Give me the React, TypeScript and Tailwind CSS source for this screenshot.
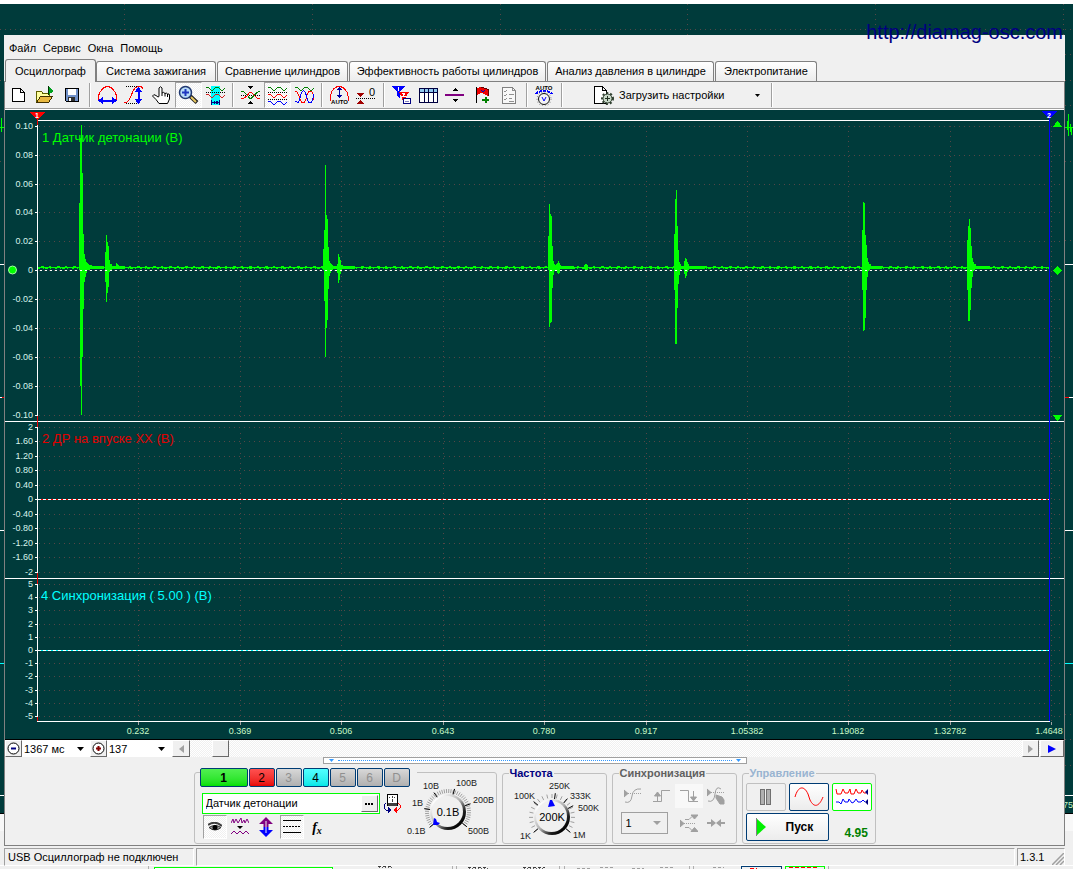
import React, { useState } from 'react';

type Column = [number, number, number];

interface Panel {
  title: string;
  titleX: number;
  titleY: number;
  color: string;
  top: number;
  bottom: number;
  labels: string[];
  rows: number[];
}

const panels: Panel[] = [
  {
    title: '1 Датчик детонации (В)',
    titleX: 42,
    titleY: 142,
    color: '#00ff00',
    top: 120,
    bottom: 415,
    labels: ['0.10', '0.08', '0.06', '0.04', '0.02', '0', '-0.02', '-0.04', '-0.06', '-0.08', '-0.10'],
    rows: [126, 155, 184, 212, 241, 270, 299, 328, 357, 386, 415]
  },
  {
    title: '2 ДР на впуске XX (В)',
    titleX: 42,
    titleY: 443,
    color: '#e00000',
    top: 427,
    bottom: 572,
    labels: ['2', '1.60', '1.20', '0.80', '0.40', '0', '-0.40', '-0.80', '-1.20', '-1.60', '-2'],
    rows: [427, 441, 456, 470, 485, 499, 514, 528, 543, 557, 572]
  },
  {
    title: '4 Синхронизация ( 5.00 ) (В)',
    titleX: 41,
    titleY: 600,
    color: '#00ffff',
    top: 584,
    bottom: 717,
    labels: ['5', '4', '3', '2', '1', '0', '-1', '-2', '-3', '-4', '-5'],
    rows: [584, 597, 610, 624, 637, 650, 663, 676, 690, 703, 716]
  }
];

const timeTicks: [number, string][] = [
  [138, '0.232'],
  [240, '0.369'],
  [341, '0.506'],
  [443, '0.643'],
  [544, '0.780'],
  [646, '0.917'],
  [747, '1.05382'],
  [848, '1.19082'],
  [950, '1.32782'],
  [1051, '1.4648']
];

// x, top, bottom of every signal column that leaves the noise band
const spikes: Column[] = [
  [79, 203, 270], [80, 138, 386], [81, 125, 415], [82, 173, 357], [83, 234, 309], [84, 254, 282], [85, 259, 277],
  [86, 262, 273], [87, 263, 270], [88, 264, 270], [89, 265, 270], [90, 265, 269], [91, 265, 269],
  [105, 252, 282], [106, 235, 302], [107, 242, 293], [108, 246, 287], [109, 260, 272], [110, 264, 271], [111, 264, 270],
  [116, 263, 269], [117, 264, 269], [118, 265, 269],
  [323, 249, 270], [324, 230, 301], [325, 165, 357], [326, 215, 328], [327, 219, 320], [328, 247, 289], [329, 261, 276],
  [330, 263, 273], [331, 264, 270], [332, 265, 270], [337, 264, 273], [338, 254, 283], [339, 257, 280], [340, 260, 274],
  [341, 265, 270], [342, 265, 269],
  [548, 236, 270], [549, 204, 327], [550, 214, 323], [551, 216, 322], [552, 246, 288], [553, 261, 275], [554, 264, 271],
  [555, 265, 270], [556, 264, 270], [557, 263, 273], [558, 261, 274], [559, 263, 273], [560, 265, 269],
  [584, 265, 269], [585, 264, 270], [586, 264, 271], [587, 265, 270],
  [674, 234, 290], [675, 199, 344], [676, 190, 344], [677, 226, 308], [678, 250, 284], [679, 262, 275], [680, 264, 271],
  [684, 261, 274], [685, 258, 278], [686, 259, 276], [687, 262, 272], [688, 264, 270],
  [862, 230, 290], [863, 202, 331], [864, 203, 330], [865, 235, 318], [866, 245, 290], [867, 258, 277], [868, 262, 271],
  [869, 264, 270], [870, 264, 269],
  [967, 240, 290], [968, 226, 321], [969, 219, 321], [970, 228, 310], [971, 246, 288], [972, 258, 277], [973, 262, 271],
  [974, 264, 270], [975, 264, 269]
];

const tails: [number, number][] = [[84, 104], [109, 125], [328, 355], [552, 574], [678, 705], [866, 882], [971, 990]];

function Scope() {
  return (
    <svg viewBox="5 110 1059 629" className="block w-full h-auto bg-[#003b3b]" shapeRendering="crispEdges">
      <path d="M5 421.5h1059M5 578.5h1059M37 120.5h1013M37 721.5h1013" stroke="#fff" />

      {panels.map((p) => (
        <g key={p.title}>
          {p.rows.map((y, i) => (
            <g key={y}>
              <path d={`M39 ${y + 0.5}H1061`} stroke="#544646" strokeDasharray="1 4" />
              <path d={`M35 ${y + 0.5}h3`} stroke="#fff" />
              <text x="33" y={y + 3} textAnchor="end" fontSize="9" fill="#d8f4ec">{p.labels[i]}</text>
            </g>
          ))}
          {timeTicks.map(([x]) => (
            <path key={x} d={`M${x + 0.5} ${p.top + 6}V${p.bottom + 4}`} stroke="#544646" strokeDasharray="1 4" />
          ))}
          <text x={p.titleX} y={p.titleY} fontSize="13" fill={p.color}>{p.title}</text>
        </g>
      ))}

      {timeTicks.map(([x, label]) => (
        <g key={x}>
          <path d={`M${x + 0.5} 722v3`} stroke="#a0a0a0" />
          <text x={x === 1051 ? 1049 : x} y="734" textAnchor="middle" fontSize="9" fill="#c8fac8">{label}</text>
        </g>
      ))}

      {/* zero lines */}
      <path d="M38 499.5h1011" stroke="#ff0000" />
      <path d="M38 499.5h1011" stroke="#fff" strokeDasharray="3 2" />
      <path d="M38 650.5h1011" stroke="#00ffff" />
      <path d="M38 650.5h1011" stroke="#fff" strokeDasharray="3 2" />

      {/* knock sensor signal */}
      <g fill="#00ff00">
        <path d="M38 267h1011v1H38z" />
        <path d="M38 268.5h1011" stroke="#00ff00" strokeDasharray="2 3 1 1 3 2 1 4" />
        <path d="M41 266.5h1008" stroke="#00ff00" strokeDasharray="3 5 2 6" />
        {tails.map(([a, b]) => (
          <rect key={a} x={a} y="266" width={b - a} height="3" />
        ))}
        {spikes.map(([x, top, bottom]) => (
          <rect key={x} x={x} y={top} width="1" height={bottom - top} />
        ))}
      </g>
      <path d="M40 270.5h1009" stroke="#fff" strokeDasharray="2 3" />

      {/* axis and cursors */}
      <path d="M37.5 120v601" stroke="#fff" />
      <path d="M37.5 119v6M37.5 416v11M37.5 573v11M37.5 717v4" stroke="#f00000" />
      <path d="M1049.5 118v603" stroke="#0000ff" />
      <path d="M30 112h15l-7 8h-1z" fill="#ff0000" />
      <path d="M1042 111h15l-7 8h-1z" fill="#0000ff" />
      <text x="37" y="118" textAnchor="middle" fontSize="7" fontWeight="700" fill="#fff">1</text>
      <text x="1049" y="118" textAnchor="middle" fontSize="7" fontWeight="700" fill="#fff">2</text>

      <g fill="#00ff00">
        <path d="M1053 127h9l-4-6h-1zM1053 415h9l-4 6h-1zM1053 270.5l4.5-4.5 4.5 4.5-4.5 4.5z" />
        <circle cx="12.5" cy="270" r="4" stroke="#a0ffa0" strokeWidth="1" shapeRendering="auto" />
      </g>
    </svg>
  );
}

// Desktop window that shows from under the main one
function Backdrop() {
  return (
    <svg viewBox="0 0 1077 869" className="absolute inset-x-0 top-0 w-full h-auto" shapeRendering="crispEdges" aria-hidden="true">
      <rect x="0" y="4" width="1073" height="809" fill="#003b3b" />
      <rect x="0" y="813" width="1073" height="1" fill="#000" />
      <rect x="0" y="814" width="1073" height="17" fill="#f8f8f8" />
      <rect x="0" y="831" width="1073" height="38" fill="#f0f0f0" />
      <path d="M0 29.5h1073M0 80.5h5M1065 54.5h8M1065 80.5h8M1065 105.5h8M0 161.5h5M1065 161.5h8M1065 240.5h8M1065 714.5h8M1065 739.5h8M1065 765.5h8" stroke="#544646" strokeDasharray="1 4" />
      <path d="M124.5 4v31M312.5 4v31M500.5 4v31M687.5 4v31M875.5 4v31M1063.5 4v31" stroke="#544646" strokeDasharray="1 4" />
      <path d="M0 264.5h4M0 530.5h4M0 795.5h4M1065 264.5h8M1065 530.5h8M1065 795.5h8" stroke="#fff" />
      <path d="M0 397.5h4M1065 397.5h8" stroke="#ff0000" />
      <path d="M0 397.5h2M1069 397.5h4" stroke="#fff" />
      <path d="M0 663.5h4M1065 663.5h8" stroke="#00ffff" />
      <path d="M1.5 118v14M0 127.5h4M1067.5 121v9M1068.5 114v22M1070.5 124v8M1071.5 127v8M1065 127.5h8" stroke="#00ff00" />
      <text x="1063" y="808" fontSize="9" fill="#c8fac8">75</text>
      <path d="M0 865.5h1073" stroke="#fff" />
      <path d="M154 869v-2h178v2" stroke="#00ff00" fill="#fff" />
      {/* tops of the dial labels */}
      <path d="M378 866.5h14M468 867.5h20M523 867.5h22" stroke="#404040" strokeDasharray="3 2" />
      <path d="M379 867.5h13M469 868.5h19M524 868.5h21" stroke="#606060" strokeDasharray="1 2" />
      <path d="M148.5 865v4M452.5 865v4M456.5 865v4M559.5 865v4M564.5 865v4M689.5 865v4M693.5 865v4M828.5 865v4" stroke="#b0b0b0" />
      <path d="M577 868.5h14M600 867.5h13M632 868.5h12M660 867.5h14M713 867.5h11" stroke="#a0a0a0" strokeDasharray="3 2" />
      <path d="M741.5 869v-3h40v3" stroke="#003c74" fill="none" />
      <path d="M785.5 869v-3h39v3" stroke="#00ff00" fill="none" />
      <path d="M750 868.5h7M789 867.5h28" stroke="#ff0000" strokeDasharray="4 2" />
    </svg>
  );
}

const wave = (y: number) => `M4 ${y}h2l3 3h2l3-3h2l3 3h2l2-2`;

// Toolbar drawings, each on a 27x22 grid
const icons: Record<string, React.ReactNode> = {
  new: <path d="M7.500 4.500h8l4 4v9h-12zM15.500 4.500v4h4" fill="#fff" stroke="#000" />,
  open: (
    <>
      <path d="M4.500 18.500v-11h5l1.500 2h6v4" fill="#ffffa0" stroke="#606000" />
      <path d="M4.500 18.500l4-6h12l-4 6z" fill="#e8b840" stroke="#403000" />
      <path d="M16 2l6 5-6 4z" fill="#00a020" />
      <path d="M16 2v9" stroke="#003000" />
    </>
  ),
  save: (
    <>
      <path d="M6.500 4.500h13v13h-12l-1-1z" fill="#7090c8" stroke="#000" />
      <path d="M9 5h8v6H9z" fill="#fff" />
      <path d="M9 13h7v4H9z" fill="#303030" />
      <path d="M10 14h2v3h-2z" fill="#fff" />
    </>
  ),
  arc: (
    <>
      <path d="M4.500 16v-4l1-3 2-3 2-2 3-1.500h2l3 1.500 2 2 2 3 1 3v4" fill="none" stroke="#ff0000" />
      <path d="M6 16.500h15" stroke="#0000ff" strokeWidth="2" />
      <path d="M4 16.500l5-3.500v7zM23 16.500l-5-3.500v7z" fill="#0000ff" />
    </>
  ),
  rise: (
    <>
      <path d="M5 2.500h12M5 19.500h12" stroke="#000" strokeDasharray="1 1" />
      <path d="M3 19l3-1 2-2 2-4 2-5 2-3 3-1.500h3l2 2" fill="none" stroke="#ff0000" />
      <path d="M17.500 5v13" stroke="#0000ff" strokeWidth="2" />
      <path d="M17.500 3l4 5h-8zM17.500 20l4-5h-8z" fill="#0000ff" />
    </>
  ),
  hand: (
    <path d="M11 12.500V4q1.500-2.500 3 0v5q1.500-1.500 3 .5 1.500-1 2.500.5 2-.5 2 1v4l-2 4.500H11l-3-4-3.500-3.500q1-2.500 3.500-.5l2 1.500zM14 9v3M17 9.500V12.500M19.500 10v3" fill="#fff" stroke="#000" shapeRendering="auto" />
  ),
  zoom: (
    <g shapeRendering="auto">
      <path d="M15 12l7 6.500" stroke="#202020" strokeWidth="4" />
      <path d="M16 13l5 5" stroke="#e8c860" strokeWidth="2" />
      <circle cx="10.500" cy="8.500" r="6" fill="#b8dcf8" stroke="#203870" strokeWidth="1.500" />
      <path d="M7 8.500h7M10.500 5v7" stroke="#2038c0" strokeWidth="2" />
    </g>
  ),
  span: (
    <>
      <path d="M9 2h9v19H9z" fill="#00ffff" />
      <path d={wave(3)} fill="none" stroke="#008000" />
      <path d="M4 8.500h19" stroke="#000" strokeDasharray="1 1" />
      <path d={wave(10)} fill="none" stroke="#d02020" />
      <path d="M9.500 16v5M17.500 16v5M10 18.500h7" stroke="#000080" />
      <path d="M10 18.500l3-2v4zM17 18.500l-3-2v4z" fill="#000080" />
    </>
  ),
  cross: (
    <>
      <path d="M4 11.500h19" stroke="#000" strokeDasharray="1 1" />
      <path d="M4 7l3 1 3 3 3 3.500h1l3-3 3-3 3-1.500" fill="none" stroke="#008000" />
      <path d="M4 15l3-1 3-2 3-4h1l3 3 3 3 3 1" fill="none" stroke="#ff0000" />
      <path d="M11 2h5l-2.500 3zM11 20h5l-2.500-3z" fill="#000" />
    </>
  ),
  split: (
    <>
      <path d={wave(3)} fill="none" stroke="#008000" />
      <path d="M4 8.500h19M4 15.500h19" stroke="#000" strokeDasharray="1 1" />
      <path d={wave(10)} fill="none" stroke="#ff0000" />
      <path d={wave(17)} fill="none" stroke="#0000ff" />
    </>
  ),
  merge: (
    <>
      <path d={wave(3)} fill="none" stroke="#008000" />
      <path d="M4 7c5 0 4 12 8 12s3-12 7-12 3 6 4 9" fill="none" stroke="#ff0000" />
      <path d="M4 17c3 2 4 2 5-3s3-9 5-6 2 11 5 11 3-7 4-9" fill="none" stroke="#0000ff" />
    </>
  ),
  autoY: (
    <>
      <path d="M4.500 17v-5l1-4 2-3 3-2 2-.5h2l3 1.500 2 2 2 3 .5 3v5" fill="none" stroke="#ff0000" />
      <path d="M13.500 4v9" stroke="#0000a0" />
      <path d="M13.500 2.500l3 3.500h-6zM13.500 14.500l3-3.500h-6z" fill="#0000a0" />
      <text x="13.500" y="20" textAnchor="middle" fontSize="6" fontWeight="700" fill="#000">AUTO</text>
    </>
  ),
  zero: (
    <>
      <path d="M3 14.500h20" stroke="#000" strokeDasharray="1 1" />
      <path d="M4 9h7l-3.500 4zM4 20h7l-3.500-4z" fill="#a00000" />
      <text x="19" y="12" textAnchor="middle" fontSize="11" fill="#000">0</text>
    </>
  ),
  filter: (
    <>
      <path d="M4 2h13l-5 6v6l-3-2V8z" fill="#0000ff" />
      <path d="M11 8h10l-3 5v6l-4-3v-3z" fill="#ff0000" />
      <path d="M10.500 3v4" stroke="#fff" />
      <path d="M14 9h3l-2 3h3" stroke="#fff" fill="none" />
      <path d="M15.500 14.500h7v5h-7z" fill="#fff" stroke="#000080" />
      <path d="M17 17.500h4" stroke="#8080c0" />
    </>
  ),
  table: (
    <>
      <path d="M4.500 4.500h18v14h-18z" fill="#fff" stroke="#000040" />
      <path d="M5 5h17v3H5z" fill="#90c8f0" />
      <path d="M4 8.500h18M9.500 5v14M13.500 5v14M18.500 5v14" stroke="#000040" />
    </>
  ),
  divide: (
    <>
      <path d="M3 10h19v2H3z" fill="#800080" />
      <path d="M10 7h6l-3-3zM10 15h6l-3 3z" fill="#000" />
    </>
  ),
  flag: (
    <>
      <path d="M7.500 3v16" stroke="#000" strokeWidth="1" />
      <path d="M8 4l4-1 3 1 4 1v7l-4-2-3-1-4 2z" fill="#ee0000" />
      <path d="M12 3.500l3 .5 4 1.500v6" stroke="#600000" fill="none" />
      <path d="M12 6l2 2 2-2" stroke="#0000c0" fill="none" />
      <path d="M13 16h7M16.500 13v6" stroke="#008000" strokeWidth="2" />
    </>
  ),
  check: (
    <>
      <path d="M6.500 3.500h10l3 3v13h-13z" fill="#f8f8f8" stroke="#808080" />
      <path d="M16.500 3.500v3h3M13 10.500h5M13 14.500h3M13 17.500h5M8 7l1 1 2-2M8 11l1 1 2-2M8 15l1 1 2-2" fill="none" stroke="#909090" />
    </>
  ),
  autoKnob: (
    <>
      <text x="13" y="6" textAnchor="middle" fontSize="6" fontWeight="700" fill="#000">AUTO</text>
      <path d="M5 10c2-4 14-4 16 0" fill="none" stroke="#0000ff" strokeWidth="2" strokeDasharray="3 1" />
      <circle cx="13" cy="15" r="5.500" fill="#f4f4f4" stroke="#101010" shapeRendering="auto" />
      <circle cx="13" cy="15" r="7" fill="none" stroke="#808080" strokeDasharray="1 2" shapeRendering="auto" />
      <path d="M11 13l2 4 2-4" fill="none" stroke="#0000ff" shapeRendering="auto" />
    </>
  )
};

interface Tool {
  icon: string;
  label: string;
  pressed?: boolean;
}

const toolGroups: Tool[][] = [
  [
    { icon: 'new', label: 'Новый' },
    { icon: 'open', label: 'Открыть' },
    { icon: 'save', label: 'Сохранить' }
  ],
  [
    { icon: 'arc', label: 'Масштаб по времени' },
    { icon: 'rise', label: 'Масштаб по амплитуде' },
    { icon: 'hand', label: 'Перемещение' },
    { icon: 'zoom', label: 'Лупа', pressed: true },
    { icon: 'span', label: 'Выделение' }
  ],
  [
    { icon: 'cross', label: 'Сжать' },
    { icon: 'split', label: 'Раздельно', pressed: true },
    { icon: 'merge', label: 'Совместно' }
  ],
  [
    { icon: 'autoY', label: 'Авто' },
    { icon: 'zero', label: 'Ноль' }
  ],
  [
    { icon: 'filter', label: 'Фильтр' },
    { icon: 'table', label: 'Таблица' },
    { icon: 'divide', label: 'Разделить' },
    { icon: 'flag', label: 'Метка' },
    { icon: 'check', label: 'Список' }
  ],
  [{ icon: 'autoKnob', label: 'Автонастройка' }]
];

const hatch = 'bg-[repeating-conic-gradient(#ffffff_0_25%,#f0f0f0_0_50%)] bg-[length:2px_2px]';
const sunken = 'border border-t-[#a0a0a0] border-l-[#a0a0a0] border-r-white border-b-white';
const raised = 'border border-t-white border-l-white border-r-[#696969] border-b-[#696969] bg-[#f0f0f0]';

function Separator() {
  return (
    <div className="w-2 h-6 flex justify-center">
      <div className="w-[2px] h-full bg-[#a0a0a0] border-r border-white" />
    </div>
  );
}

function Toolbar() {
  return (
    <div className="flex items-center h-[27px] border-b border-[#a0a0a0]">
      {toolGroups.map((group, i) => (
        <React.Fragment key={i}>
          {group.map((t) => (
            <button
              key={t.icon}
              aria-label={t.label}
              className={`w-[27px] h-[26px] flex items-center justify-center ${t.pressed ? `${hatch} ${sunken}` : ''}`}
            >
              <svg width="27" height="22" viewBox="0 0 27 22" className="shrink-0" shapeRendering="crispEdges">{icons[t.icon]}</svg>
            </button>
          ))}
          <Separator />
        </React.Fragment>
      ))}
      <button className="ml-6 w-[178px] h-[26px] flex items-center text-[11px]">
        <svg width="26" height="22" viewBox="0 0 26 22" className="shrink-0" shapeRendering="crispEdges">
          <path d="M4.500 2.500h8l4 4v13h-12zM12.500 2.500v4h4" fill="#fff" stroke="#000" />
          <g shapeRendering="auto">
            <circle cx="17.500" cy="14.500" r="4.500" fill="#c8d8c8" stroke="#304030" />
            <circle cx="17.500" cy="14.500" r="5.500" fill="none" stroke="#304030" strokeWidth="2" strokeDasharray="2 2" />
            <path d="M15 14.500h5M17.500 12v5" stroke="#203020" />
          </g>
        </svg>
        <span className="ml-[3px] flex-1 text-left whitespace-nowrap">Загрузить настройки</span>
        <svg width="5" height="3" viewBox="0 0 5 3" className="mr-2"><path d="M0 0h5L2.500 3z" fill="#000" /></svg>
      </button>
      <Separator />
    </div>
  );
}

const tabs = [
  { name: 'Осциллограф', width: 'w-[91px]' },
  { name: 'Система зажигания', width: 'w-[120px]' },
  { name: 'Сравнение цилиндров', width: 'w-[131px]' },
  { name: 'Эффективность работы цилиндров', width: 'w-[197px]' },
  { name: 'Анализ давления в цилиндре', width: 'w-[167px]' },
  { name: 'Электропитание', width: 'w-[102px]' }
];

function TabBar() {
  const [active, setActive] = useState(0);

  return (
    <div role="tablist" className="flex items-end h-[23px] pl-px border-b border-[#808080]">
      {tabs.map((t, i) => (
        <button
          key={t.name}
          role="tab"
          aria-selected={i === active}
          onClick={() => setActive(i)}
          className={`${t.width} shrink-0 text-[11px] text-center whitespace-nowrap border border-b-0 border-[#808080] rounded-t-[3px] ${
            i === active ? 'h-[23px] -mb-px bg-[#f0f0f0]' : 'h-5 mr-px bg-linear-to-b from-white to-[#ececec]'
          }`}
        >
          {t.name}
        </button>
      ))}
    </div>
  );
}

function TimeBar() {
  const combo = 'block appearance-none w-full h-full pl-[2px] bg-white text-[11px] leading-4 outline-none';
  return (
    <div className={`flex items-stretch h-[18px] border-t border-black ${hatch}`}>
      <button aria-label="Уменьшить" className={`w-[17px] flex items-center justify-center ${raised}`}>
        <svg width="13" height="13" viewBox="0 0 13 13" className="shrink-0"><circle cx="6.500" cy="6.500" r="5.500" fill="#fff" stroke="#000" /><path d="M4 6.500h5" stroke="#000080" strokeWidth="2" /></svg>
      </button>
      <div className="relative w-[66px] pr-[2px] bg-white">
        <select aria-label="Длительность" className={combo}><option>1367 мс</option></select>
        <svg width="7" height="4" viewBox="0 0 7 4" className="absolute right-1 top-[7px] pointer-events-none"><path d="M0 0h7L3.500 4z" /></svg>
      </div>
      <div className="w-[2px] bg-white" />
      <button aria-label="Увеличить" className={`w-[17px] flex items-center justify-center ${raised}`}>
        <svg width="13" height="13" viewBox="0 0 13 13" className="shrink-0"><circle cx="6.500" cy="6.500" r="5.500" fill="#fff" stroke="#000" /><path d="M4 6.500h5M6.500 4v5" stroke="#800000" strokeWidth="2" /></svg>
      </button>
      <div className="relative w-[65px] bg-white">
        <select aria-label="Масштаб" className={combo}><option>137</option></select>
        <svg width="7" height="4" viewBox="0 0 7 4" className="absolute right-[7px] top-[7px] pointer-events-none"><path d="M0 0h7L3.500 4z" /></svg>
      </div>
      <button aria-label="Назад" className={`w-[18px] flex items-center justify-center ${raised}`}>
        <svg width="5" height="8" viewBox="0 0 5 8"><path d="M5 0v8L0 4z" fill="#a0a0a0" /></svg>
      </button>
      <div className="flex-1 flex"><div className={`ml-[22px] w-[17px] ${raised}`} /></div>
      <button aria-label="Вперёд" className={`w-[17px] mr-px flex items-center justify-center ${raised}`}>
        <svg width="5" height="8" viewBox="0 0 5 8"><path d="M0 0v8l5-4z" fill="#a0a0a0" /></svg>
      </button>
      <button aria-label="Воспроизвести" className={`w-6 flex items-center justify-center ${raised}`}>
        <svg width="8" height="8" viewBox="0 0 8 8"><path d="M0 0v8l8-4z" fill="#0000ff" /></svg>
      </button>
    </div>
  );
}

interface KnobProps {
  cx: number;
  step: number;
  value: string;
  pointer: string;
  marks: [number, number, number, string][]; // angle, label x, label y, label
  viewBox: string;
  width: number;
}

function Knob({ cx, step, value, pointer, marks, viewBox, width }: KnobProps) {
  const cy = 817;
  const tick = (deg: number, r1: number, r2: number) => {
    const a = (deg * Math.PI) / 180;
    return `M${cx + r1 * Math.sin(a)} ${cy - r1 * Math.cos(a)}L${cx + r2 * Math.sin(a)} ${cy - r2 * Math.cos(a)}`;
  };
  const minor: number[] = [];
  for (let d = -130; d <= 130; d += step) minor.push(d);
  const id = `knob-${cx}`;

  return (
    <svg width={width} height="64" viewBox={viewBox} className="shrink-0">
      <defs>
        <linearGradient id={id} x1="0.15" y1="0.15" x2="0.85" y2="0.85">
          <stop offset="0" stopColor="#ffffff" />
          <stop offset="0.5" stopColor="#b0b0b0" />
          <stop offset="0.8" stopColor="#202020" />
          <stop offset="1" stopColor="#000000" />
        </linearGradient>
      </defs>
      {minor.map((d) => <path key={d} d={tick(d, 19, 23)} stroke="#a0a0a0" />)}
      {marks.map(([d]) => <path key={d} d={tick(d, 18, 24)} stroke="#000" />)}
      <circle cx={cx} cy={cy} r="18" fill={`url(#${id})`} />
      <circle cx={cx - 0.5} cy={cy - 0.5} r="15.500" fill="#f0f0f0" />
      <path d={pointer} fill="#0000ff" />
      <text x={cx} y="821" textAnchor="middle" fontSize="11" fill="#000">{value}</text>
      {marks.map(([, x, y, label]) => (
        <text key={label} x={x} y={y} fontSize="9" fill="#202020">{label}</text>
      ))}
    </svg>
  );
}

const channels = [
  { name: '1', style: 'w-12 font-bold text-black bg-linear-to-b from-[#50f050] to-[#00e000]' },
  { name: '2', style: 'w-[26px] text-black bg-linear-to-b from-[#ff5050] to-[#e80000]' },
  { name: '3', style: 'w-[26px] text-[#909090] bg-linear-to-b from-[#d8d8d8] to-[#b0b0b0]' },
  { name: '4', style: 'w-[26px] text-black bg-linear-to-b from-[#50ffff] to-[#00e8e8]' },
  { name: '5', style: 'w-[26px] text-[#909090] bg-linear-to-b from-[#d8d8d8] to-[#b0b0b0]' },
  { name: '6', style: 'w-[26px] text-[#909090] bg-linear-to-b from-[#d8d8d8] to-[#b0b0b0]' },
  { name: 'D', style: 'w-[26px] text-[#909090] bg-linear-to-b from-[#d8d8d8] to-[#b0b0b0]' }
];

function ChannelGroup() {
  return (
    <div className="flex w-[303px] h-[72px] mt-2 pl-[5px] border border-[#c0c0c0] rounded-[3px]">
      <div className="w-[206px] shrink-0">
        <div className="flex gap-px w-[217px] -mt-[5px] bg-[#f0f0f0]">
          {channels.map((c) => (
            <button key={c.name} className={`${c.style} h-[19px] leading-[16px] text-[12px] border border-[#003c74] rounded-[2px]`}>
              {c.name}
            </button>
          ))}
        </div>
        <div className="flex items-center gap-[3px] mt-[6px] pl-[2px]">
          <div className="flex w-[178px] h-[21px] shrink-0 items-center bg-white border border-[#00ff00] pr-px">
            <input aria-label="Название канала" defaultValue="Датчик детонации" className="flex-1 min-w-0 h-4 pl-[3px] text-[11px] outline-none" />
            <button aria-label="Выбрать" className={`w-[17px] h-[17px] flex items-center justify-center ${raised}`}>
              <svg width="8" height="2" viewBox="0 0 8 2" shapeRendering="crispEdges"><path d="M0 0h2v2H0zM3 0h2v2H3zM6 0h2v2H6z" /></svg>
            </button>
          </div>
          <button aria-label="Датчик" className="shrink-0">
            <svg width="19" height="19" viewBox="0 0 19 19" shapeRendering="crispEdges">
              <path d="M4.500.5h10v11h-10z" fill="#fff" stroke="#000" />
              <path d="M5 9h9v3H5z" fill="#404040" />
              <path d="M6 3l1 1M9 2v2M12 3l-1 1M9 8l1-3" stroke="#404040" />
              <path d="M3 9l-2 2v3l2 2h3" fill="none" stroke="#000080" />
              <path d="M5 13l4 3-4 3z" fill="#000080" />
              <path d="M15 9l2 2v3l-2 2h-2" fill="none" stroke="#ff0000" />
              <path d="M14 13l-4 3 4 3z" fill="#ff0000" />
            </svg>
          </button>
        </div>
        <div className="flex items-center gap-px pl-[3px] mt-px">
          <button aria-label="Показать" className={`w-6 h-6 flex items-center justify-center ${hatch} ${sunken}`}>
            <svg width="14" height="10" viewBox="0 0 14 10">
              <path d="M0 3q7-5 14 1" fill="none" stroke="#404040" strokeWidth="2" />
              <path d="M1 5.500q6-4 12 0-6 5-12 0z" fill="#a0a0a0" stroke="#303030" />
              <circle cx="7" cy="5.500" r="2.500" fill="#000" />
            </svg>
          </button>
          <button aria-label="Сглаживание" className="w-[25px] h-6 flex items-center justify-center">
            <svg width="18" height="18" viewBox="0 0 18 18">
              <path d="M0 5l2-4 1 4 2-4 2 4 3-5 1 5 2-3 1 3 2-4 2 4" fill="none" stroke="#800080" />
              <path d="M6 8h6l-3 3z" fill="#000" />
              <path d="M0 16l3-3 3 3 3-3 3 3 3-3 3 3" fill="none" stroke="#800080" />
            </svg>
          </button>
          <button aria-label="Инверсия" className="w-[25px] h-6 flex items-center justify-center">
            <svg width="16" height="20" viewBox="0 0 16 20">
              <path d="M8 0l7 7h-4.500v3h-5V7H1z" fill="#800080" />
              <path d="M8 20l7-7h-4.500v-3h-5v3H1z" fill="#0000ff" />
              <path d="M8 4v12" stroke="#f0f0f0" />
            </svg>
          </button>
          <button aria-label="Линии" className={`w-6 h-6 flex items-center justify-center ${hatch} ${sunken}`}>
            <svg width="18" height="14" viewBox="0 0 18 14" className="shrink-0" shapeRendering="crispEdges">
              <path d="M0 .5h18M0 12.500h18" stroke="#000" />
              <path d="M0 6.500h18" stroke="#000" strokeDasharray="2 1" />
            </svg>
          </button>
          <button className="w-[25px] h-6 font-['Liberation_Serif',serif] text-[14px] font-bold italic">
            f<sub className="text-[10px]">x</sub>
          </button>
        </div>
      </div>
      <Knob
        cx={449}
        step={6}
        value="0.1В"
        pointer="M434 830l1-7 2 1 1 3 3 1-2 2z"
        marks={[
          [-130, 408, 839, '0.1В'],
          [-82, 413, 811, '1В'],
          [-36, 424, 794, '10В'],
          [16, 457, 791, '100В'],
          [70, 474, 808, '200В'],
          [128, 469, 839, '500В']
        ]}
        viewBox="407 778 90 64"
        width={90}
      />
    </div>
  );
}

function Group({ title, titleClass, className, children }: { title: string; titleClass: string; className: string; children: React.ReactNode }) {
  return (
    <fieldset className={`h-[78px] min-w-0 border border-[#c0c0c0] rounded-[3px] ${className}`}>
      <legend className={`ml-[6px] px-px h-[14px] leading-[14px] text-[11px] font-bold ${titleClass}`}>{title}</legend>
      {children}
    </fieldset>
  );
}

function SyncGroup() {
  const btn = 'w-7 h-6 flex items-center justify-center';
  return (
    <Group title="Синхронизация" titleClass="text-[#606060]" className="w-[125px]">
      <div className="flex pl-[6px] mt-[4px]">
        <button aria-label="По уровню" disabled className={btn}>
          <svg width="18" height="18" viewBox="0 0 18 18" fill="none" stroke="#a0a0a0">
            <path d="M0 3v7l4-3.500z" fill="#a0a0a0" />
            <path d="M4 6.500h13" strokeDasharray="1 1" />
            <path d="M1 15q6 2 7-6t9-7" />
          </svg>
        </button>
        <button aria-label="Фронт" disabled className={btn}>
          <svg width="18" height="16" viewBox="0 0 18 16" fill="none" stroke="#a0a0a0">
            <path d="M1 13.500h8.500v-11H18M5.500 13V5" />
            <path d="M2.500 8l3-4 3 4z" fill="#a0a0a0" />
          </svg>
        </button>
        <button aria-label="Спад" disabled className={`${btn} bg-[#f8f8f8]`}>
          <svg width="18" height="16" viewBox="0 0 18 16" fill="none" stroke="#a0a0a0">
            <path d="M0 2.500h8.500v11H18M13.500 3v8" />
            <path d="M10.500 9l3 4 3-4z" fill="#a0a0a0" />
          </svg>
        </button>
        <button aria-label="Вручную" disabled className={btn}>
          <svg width="20" height="20" viewBox="0 0 20 20" fill="none" stroke="#a0a0a0">
            <path d="M0 3v7l4-3.500z" fill="#a0a0a0" />
            <path d="M4 6.500h13" strokeDasharray="1 1" />
            <path d="M1 15q6 2 7-7t6-5" />
            <path d="M9 9l3 1 3 1 2 3v4h-4l-2-3-2-3z" fill="#a0a0a0" />
          </svg>
        </button>
      </div>
      <div className="flex items-center pl-2 mt-1">
        <div className="relative w-[47px] h-[22px] mr-3">
          <select aria-label="Канал синхронизации" className="block appearance-none w-full h-full pl-1 text-[11px] leading-4 text-black border border-[#a0a0a0] bg-[#f0f0f0] outline-none"><option>1</option></select>
          <svg width="8" height="4" viewBox="0 0 8 4" className="absolute right-[7px] top-[9px] pointer-events-none"><path d="M0 0h8L4 4z" fill="#a0a0a0" /></svg>
        </div>
        <svg width="18" height="18" viewBox="0 0 18 18" fill="none" stroke="#a0a0a0">
          <path d="M0 6v7l4-3.500z" fill="#a0a0a0" />
          <path d="M4 9.500h12" strokeDasharray="1 1" />
          <path d="M5 5.500h4l3-3M5 13.500h4l3 3" />
          <path d="M11 1h7l-3.500 4zM11 17.500h7l-3.500-4z" fill="#a0a0a0" />
        </svg>
        <svg width="18" height="10" viewBox="0 0 18 10" fill="#a0a0a0" className="ml-[9px]">
          <path d="M0 4h4V1l5 4-5 4V6H0zM18 4h-4V1L9 5l5 4V6h4z" />
        </svg>
      </div>
    </Group>
  );
}

function ControlGroup() {
  return (
    <Group title="Управление" titleClass="text-[#99b4d1]" className="w-[134px]">
      <div className="flex gap-[3px] pl-[3px] mt-[3px]">
        <button aria-label="Пауза" disabled className="w-10 h-7 flex items-center justify-center border border-[#c0c0c0] rounded-[2px]">
          <svg width="11" height="16" viewBox="0 0 11 16" shapeRendering="crispEdges"><path d="M.5.5h4v15h-4zM6.500.5h4v15h-4z" fill="#b0b0b0" stroke="#707070" /></svg>
        </button>
        <button aria-label="Осциллограмма" className="w-10 h-7 flex items-center justify-center border border-[#003c74] rounded-[2px] bg-linear-to-b from-white to-[#ececec]">
          <svg width="30" height="20" viewBox="0 0 30 20"><path d="M1 10C4-1 10-2 14 7l2 6c4 8 9 7 13-3" fill="none" stroke="#ff0000" /></svg>
        </button>
        <button aria-label="Прокрутка" className="w-10 h-7 flex items-center justify-center border border-[#00ff00] rounded-[2px] bg-white">
          <svg width="34" height="20" viewBox="0 0 34 20" fill="none">
            <path d="M1 2l1 5h4l2-5 2 4h3l2-4 1 5h3l2-5 2 4h3l1-3 2 3h2" stroke="#ff0000" />
            <path d="M1 15h3l2 2 2-5 2 3h3l1-3 3 4 2-1 2-3 2 3h3l2-2 2 2" stroke="#0000ff" />
            <path d="M33 2v6l-3-3zM33 12v6l-3-3z" fill="#000080" />
          </svg>
        </button>
      </div>
      <div className="flex pl-[3px] mt-[2px]">
        <button className="w-[83px] h-7 flex items-center pl-[9px] text-[12px] font-bold border border-[#003c74] rounded-[2px] bg-linear-to-b from-white to-[#ececec]">
          <svg width="10" height="18" viewBox="0 0 10 18"><path d="M0 0v18l10-9z" fill="#00f000" /><path d="M.5 0v18" stroke="#808080" /></svg>
          <span className="ml-5">Пуск</span>
        </button>
        <span className="ml-4 mt-[13px] text-[12px] leading-[14px] font-bold text-[#008000]">4.95</span>
      </div>
    </Group>
  );
}

export default function App() {
  return (
    <div className="relative min-h-screen bg-white overflow-hidden text-black font-['Liberation_Sans',Arial,sans-serif]">
      <Backdrop />
      <main className="relative ml-1 mr-3 mt-[35px] bg-[#f0f0f0]">
        <a href="http://diamag-osc.com" className="absolute right-[2px] -top-[15px] text-[20px] leading-6 text-[#000080]">http://diamag-osc.com</a>
        <nav className="flex items-center gap-[7px] h-6 pt-[2px] pl-[5px] text-[11px]">
          <button>Файл</button>
          <button>Сервис</button>
          <button>Окна</button>
          <button>Помощь</button>
        </nav>
        <TabBar />
        <div className="border border-t-0 border-[#808080]">
          <Toolbar />
          <div className="h-px bg-white" />
          <Scope />
          <TimeBar />
          <div className="flex items-center justify-between w-[424px] h-[7px] px-[5px] mx-auto bg-white border border-[#a0a0a0]">
            <svg width="5" height="3" viewBox="0 0 5 3"><path d="M0 0h5L2.500 3z" fill="#3399ff" /></svg>
            <div className="flex-1 mx-1 border-t border-dotted border-[#3399ff]" />
            <svg width="5" height="3" viewBox="0 0 5 3"><path d="M0 0h5L2.500 3z" fill="#3399ff" /></svg>
          </div>
          <div className="flex justify-center gap-[5px] h-[81px]">
            <ChannelGroup />
            <div className="mt-[2px]">
              <Group title="Частота" titleClass="text-[#000080]" className="w-[105px]">
                <div className="-mt-[2px]">
                  <Knob
                    cx={552}
                    step={13}
                    value="200K"
                    pointer="M548 807l2-7 2 0 3 6z"
                    marks={[
                      [-130, 520, 839, '1K'],
                      [-50, 514, 799, '100K'],
                      [8, 549, 789, '250K'],
                      [40, 570, 799, '333K'],
                      [62, 578, 811, '500K'],
                      [130, 573, 838, '1M']
                    ]}
                    viewBox="503 778 103 64"
                    width={103}
                  />
                </div>
              </Group>
            </div>
            <div className="mt-[2px]"><SyncGroup /></div>
            <div className="mt-[2px]"><ControlGroup /></div>
          </div>
        </div>
        <footer className="flex gap-[2px] pt-[2px] h-5 text-[11px]">
          <div className={`w-[190px] pl-[3px] leading-4 whitespace-nowrap ${sunken}`}>USB Осциллограф не подключен</div>
          <div className={`flex-1 ${sunken}`} />
          <div className={`w-[48px] pl-[2px] flex items-end justify-between leading-4 ${sunken}`}>
            1.3.1
            <svg width="12" height="12" viewBox="0 0 12 12"><path d="M0 12L12 0M4 12l8-8M8 12l4-4" stroke="#a0a0a0" strokeWidth="1.500" /></svg>
          </div>
        </footer>
      </main>
    </div>
  );
}
